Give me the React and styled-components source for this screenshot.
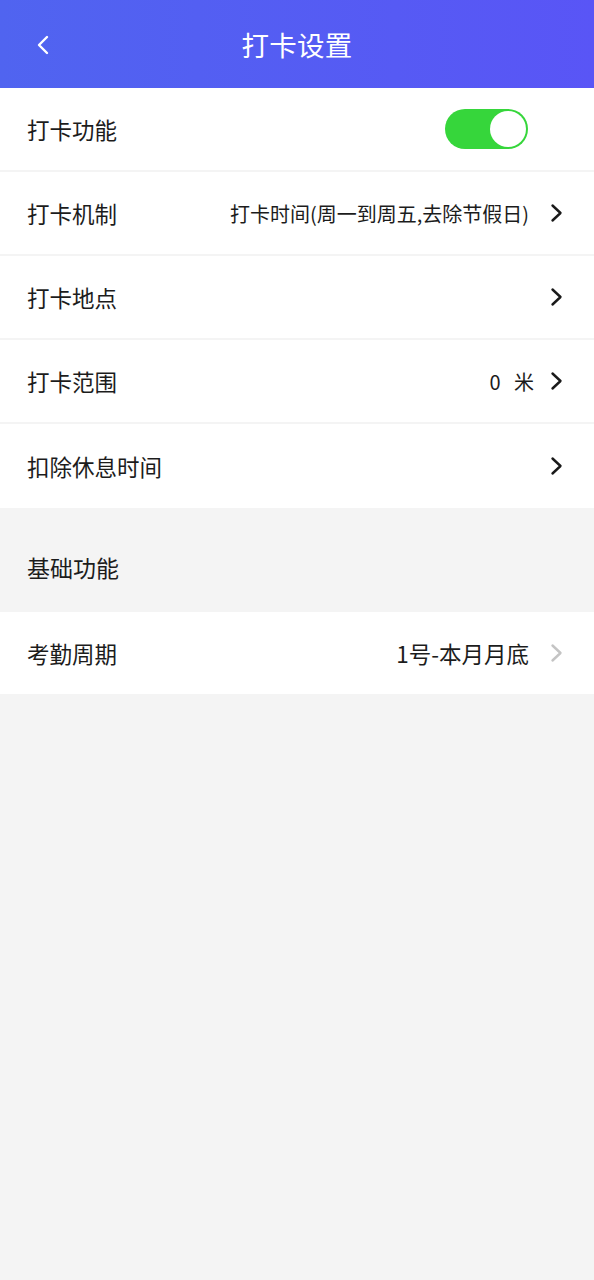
import React from "react";
import styled, { createGlobalStyle } from "styled-components";

const Global = createGlobalStyle`
  html, body { margin: 0; padding: 0; background: #f4f4f4; }
  body { font-family: "Noto Sans CJK SC", "Noto Sans", sans-serif; }
  * { box-sizing: border-box; }
`;

const Page = styled.div`
  width: 594px;
  min-height: 1280px;
  background: #f4f4f4;
  display: flex;
  flex-direction: column;
`;

const Header = styled.header`
  height: 88px;
  background: linear-gradient(90deg, #5064f0 0%, #5955f6 100%);
  display: grid;
  grid-template-columns: 88px 1fr 88px;
  align-items: center;
  color: #fff;
`;

const BackButton = styled.div`
  display: flex;
  align-items: center;
  justify-content: flex-start;
  padding-left: 35px;
  padding-top: 2px;
`;

const Title = styled.h1`
  margin: 0;
  text-align: center;
  font-size: 27.5px;
  font-weight: 400;
  letter-spacing: 0.3px;
`;

const Group = styled.section`
  background: #fff;
  display: flex;
  flex-direction: column;
`;

const Row = styled.div`
  height: ${(p) => p.$h || 84}px;
  display: flex;
  align-items: center;
  padding: 0 30px 0 27px;
  border-bottom: ${(p) => (p.$last ? "none" : "2px solid #f4f4f4")};
`;

const Label = styled.span`
  font-size: 22.5px;
  color: #1c1c1c;
  flex: 1;
`;

const Value = styled.span`
  font-size: ${(p) => p.$size || 22.5}px;
  color: #1c1c1c;
  margin-right: ${(p) => p.$gap || 20}px;
  white-space: nowrap;
`;

const SectionTitle = styled.div`
  height: 104px;
  display: flex;
  align-items: center;
  padding: 14px 27px 0;
  font-size: 23px;
  color: #1c1c1c;
`;

const Toggle = styled.div`
  width: 83px;
  height: 40px;
  border-radius: 20px;
  background: #36d63b;
  display: flex;
  align-items: center;
  justify-content: flex-end;
  padding-right: 2px;
  margin-right: 36px;
`;

const Knob = styled.div`
  width: 36px;
  height: 36px;
  border-radius: 50%;
  background: #fff;
`;

const Chevron = ({ color = "#1a1a1a" }) => (
  <svg width="15" height="20" viewBox="0 0 15 20" style={{ flexShrink: 0 }}>
    <path d="M3.5 2.5 L11.5 10 L3.5 17.5" fill="none" stroke={color} strokeWidth="2.4" strokeLinecap="round" strokeLinejoin="round" />
  </svg>
);

export default function App() {
  return (
    <Page>
      <Global />
      <Header>
        <BackButton>
          <svg width="16" height="22" viewBox="0 0 16 22">
            <path d="M12 3 L4 11 L12 19" fill="none" stroke="#fff" strokeWidth="2.4" strokeLinecap="round" strokeLinejoin="round" />
          </svg>
        </BackButton>
        <Title>打卡设置</Title>
        <div />
      </Header>
      <Group>
        <Row>
          <Label>打卡功能</Label>
          <Toggle>
            <Knob />
          </Toggle>
        </Row>
        <Row>
          <Label>打卡机制</Label>
          <Value $size={20}>打卡时间(周一到周五,去除节假日)</Value>
          <Chevron />
        </Row>
        <Row>
          <Label>打卡地点</Label>
          <Chevron />
        </Row>
        <Row>
          <Label>打卡范围</Label>
          <Value $size={20} $gap={15}>0&nbsp;&nbsp;&nbsp;米</Value>
          <Chevron />
        </Row>
        <Row $last>
          <Label>扣除休息时间</Label>
          <Chevron />
        </Row>
      </Group>
      <SectionTitle>基础功能</SectionTitle>
      <Group>
        <Row $h={82} $last>
          <Label>考勤周期</Label>
          <Value>1号-本月月底</Value>
          <Chevron color="#c4c4c4" />
        </Row>
      </Group>
    </Page>
  );
}
